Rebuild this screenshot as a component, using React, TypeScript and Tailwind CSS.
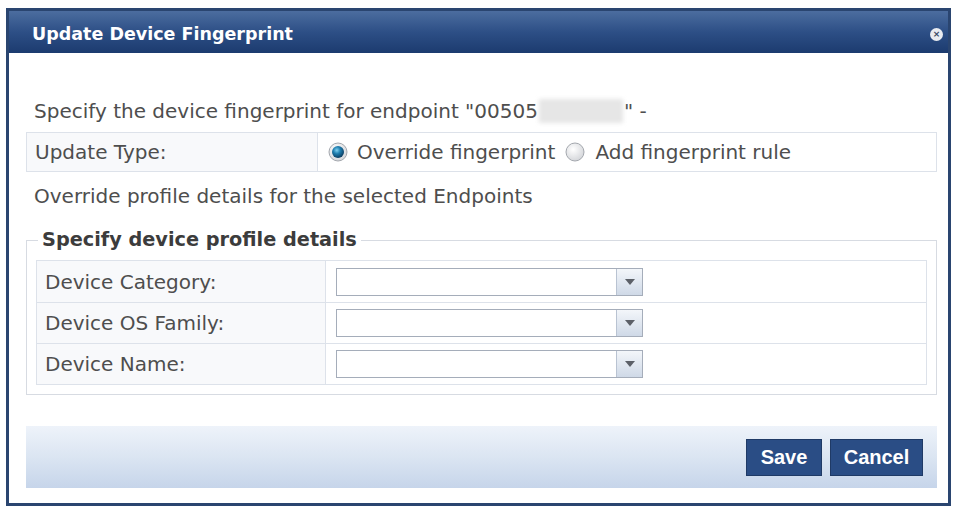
import React from "react";

function Radio({ checked }: { checked: boolean }) {
  return (
    <svg width="20" height="20" viewBox="0 0 20 20" className="shrink-0">
      <defs>
        <radialGradient id="radioOn" cx="40%" cy="35%" r="65%">
          <stop offset="0%" stopColor="#7fd0f0" />
          <stop offset="45%" stopColor="#1f7fb0" />
          <stop offset="100%" stopColor="#0b3e63" />
        </radialGradient>
        <radialGradient id="radioOff" cx="40%" cy="35%" r="70%">
          <stop offset="0%" stopColor="#ffffff" />
          <stop offset="100%" stopColor="#d2d4d8" />
        </radialGradient>
      </defs>
      <circle cx="10" cy="10" r="9" fill="url(#radioOff)" stroke="#a4a8ae" strokeWidth="1" />
      {checked && <circle cx="10" cy="10" r="6" fill="url(#radioOn)" />}
    </svg>
  );
}

function SelectBox() {
  return (
    <div className="flex h-[28px] w-[307px] border border-[#a5adba] bg-white">
      <div className="flex-1" />
      <div className="flex w-[26px] items-center justify-center border-l border-[#b9c3d2] bg-gradient-to-b from-[#f3f6fa] to-[#cfd9e7]">
        <svg width="10" height="6" viewBox="0 0 10 6">
          <path d="M0 0 L10 0 L5 6 Z" fill="#5c6068" />
        </svg>
      </div>
    </div>
  );
}

const profileRows = ["Device Category:", "Device OS Family:", "Device Name:"];

export default function App() {
  return (
    <div className="h-[510px] w-[956px] bg-white pl-[6px] pt-[8px] font-['DejaVu_Sans',sans-serif] text-[20px] text-[#4e4e4e]">
      <div className="flex h-[498px] w-[945px] flex-col border-[3px] border-[#2a4570] bg-white">
        {/* title bar */}
        <div className="flex h-[42px] shrink-0 items-center justify-between bg-gradient-to-b from-[#4c6d9f] via-[#2d4f86] to-[#1c3b6f] pl-[23px] pr-[5px] pt-[4px]">
          <span className="text-[17.5px] font-bold text-white">Update Device Fingerprint</span>
          <span className="flex h-[13px] w-[13px] items-center justify-center rounded-full bg-[#e9ecf1]">
            <span className="text-[9px] font-bold leading-none text-[#3a4a64]">×</span>
          </span>
        </div>

        <div className="flex flex-1 flex-col pl-[17px] pr-[11px]">
          <div className="mt-[46px] flex h-[24px] items-center pl-[8px]">
            <span>Specify the device fingerprint for endpoint "00505</span>
            <span className="mx-[1px] h-[24px] w-[84px] bg-[#e6e6e6] blur-[2px]" />
            <span>" -</span>
          </div>

          <div className="mt-[9px] flex h-[40px] border border-[#dde2ea]">
            <div className="flex w-[291px] items-center border-r border-[#dde2ea] bg-[#f8f9fb] pl-[8px]">
              Update Type:
            </div>
            <div className="flex items-center gap-[10px] pl-[10px]">
              <Radio checked />
              <span className="-ml-[1px]">Override fingerprint</span>
              <Radio checked={false} />
              <span>Add fingerprint rule</span>
            </div>
          </div>

          <div className="mt-[12px] flex h-[24px] items-center pl-[8px]">
            Override profile details for the selected Endpoints
          </div>

          <fieldset className="mt-[20px] border border-[#d7dbe2] pb-[9px] pl-[9px] pr-[9px]">
            <legend className="ml-[2px] px-[4px] text-[19.3px] font-bold leading-[24px] text-[#3c3c3c]">
              Specify device profile details
            </legend>
            <div className="mt-[8px] border border-[#dde2ea]">
              {profileRows.map((label, i) => (
                <div
                  key={label}
                  className={`flex h-[41px] ${i > 0 ? "border-t border-[#dde2ea]" : ""}`}
                >
                  <div className="flex w-[289px] items-center border-r border-[#dde2ea] bg-[#f8f9fb] pl-[8px]">
                    {label}
                  </div>
                  <div className="flex items-center pl-[10px]">
                    <SelectBox />
                  </div>
                </div>
              ))}
            </div>
          </fieldset>

          <div className="mt-[31px] flex h-[62px] items-center justify-end gap-[8px] bg-gradient-to-b from-[#eef3fa] via-[#dbe5f2] to-[#c6d5ea] pr-[14px]">
            <button className="h-[37px] w-[76px] border border-[#1f3a66] bg-[#2a4d85] font-['Liberation_Sans',sans-serif] text-[20px] font-bold text-white">
              Save
            </button>
            <button className="h-[37px] w-[93px] border border-[#1f3a66] bg-[#2a4d85] font-['Liberation_Sans',sans-serif] text-[20px] font-bold text-white">
              Cancel
            </button>
          </div>
        </div>
      </div>
    </div>
  );
}
